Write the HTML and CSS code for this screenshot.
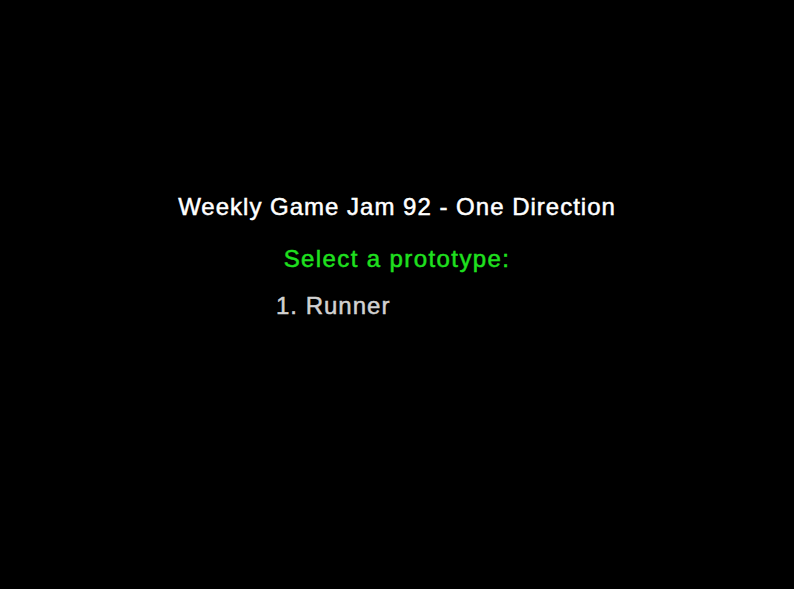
FILE: index.html
```html
<!DOCTYPE html>
<html>
<head>
<meta charset="utf-8">
<link rel="stylesheet" href="styles.css">
</head>
<body>
<main class="menu">
  <h1 class="title">Weekly Game Jam 92 - One Direction</h1>
  <h2 class="prompt">Select a prototype:</h2>
  <ol class="options">
    <li class="option">1. Runner</li>
  </ol>
</main>
</body>
</html>
```

FILE: styles.css
```css
html, body {
  margin: 0;
  padding: 0;
  background: #000;
  width: 794px;
  height: 589px;
  overflow: hidden;
}
.menu {
  font-family: "Liberation Sans", Arial, sans-serif;
  font-size: 24px;
  line-height: 24px;
  padding-top: 195px;
}
.title, .prompt, .options, .option {
  margin: 0;
  padding: 0;
  font-weight: normal;
  font-size: 24px;
  -webkit-text-stroke: 0.5px currentColor;
}
.title {
  color: #ffffff;
  text-align: center;
  letter-spacing: 1px;
}
.prompt {
  color: #1fe01f;
  text-align: center;
  letter-spacing: 1.4px;
  margin-top: 28px;
}
.options {
  list-style: none;
  margin-top: 23px;
  padding-left: 276px;
}
.option {
  color: #d2d2d2;
  letter-spacing: 1px;
}
```
